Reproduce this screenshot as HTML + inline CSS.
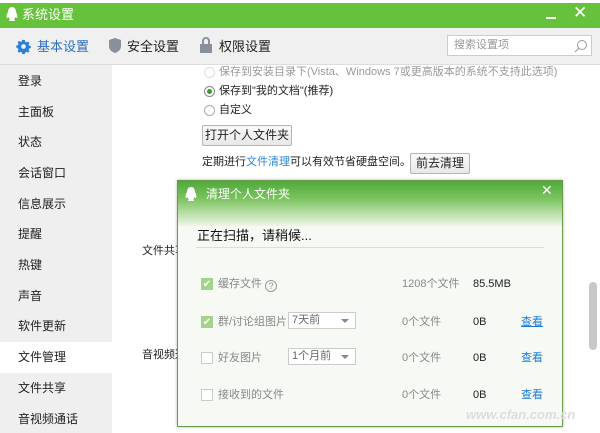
<!DOCTYPE html>
<html><head><meta charset="utf-8"><style>
*{margin:0;padding:0;box-sizing:border-box}
body{width:600px;height:433px;overflow:hidden;background:#fff;font-family:"Liberation Sans","Noto Sans CJK SC",sans-serif;font-size:12px;color:#222;position:relative}
.abs{position:absolute;line-height:15px}
.title{left:0;top:3px;width:600px;height:25px;background:#66c23b;color:#fff;font-size:13px}
.tabs{left:0;top:28px;width:600px;height:37px;background:#f0f0f0;border-bottom:1px solid #ddd}
.side{left:0;top:65px;width:112px;height:368px;background:#efefef}
.si{position:absolute;left:18px;font-size:12px;color:#222;line-height:15px}
.btn{position:absolute;border:1px solid #b5b5b5;background:linear-gradient(#fafafa,#e8e8e8);border-radius:2px;text-align:center;font-size:12px;line-height:19px}
.radio{position:absolute;width:11px;height:11px;border:1px solid #aaa;border-radius:50%;background:#fff}
.dlg{left:177px;top:180px;width:386px;height:247px;border:1px solid #6a9a4a;background:#f7faf4;box-shadow:0 0 3px rgba(0,0,0,.3)}
.chk{position:absolute;width:12px;height:12px;border:1px solid #ccc;background:#fff}
.chk.on{background:#a3d48a;border-color:#a3d48a;color:#fff;font-size:10px;line-height:11px;text-align:center}
.g{color:#888}
.sel{position:absolute;width:68px;height:17px;border:1px solid #ccc;background:#fff;color:#666;font-size:11px;line-height:15px;padding-left:3px}
.sel:after{content:"";position:absolute;right:6px;top:6px;border:4px solid transparent;border-top:4px solid #888}
.lk{color:#1a7ad8;text-decoration:underline;position:absolute;line-height:15px}
</style></head><body>
<div class="abs title">
 <svg class="abs" style="left:6px;top:4px" width="12" height="15" viewBox="0 0 12 15"><path d="M6 0C3 0 2 3 2 5 1 7 0 9 1 11c1 0 2-1 2-1 0 2 1 3 1 3-1 0-2 1 0 1h4c2 0 1-1 0-1 0 0 1-1 1-3 0 0 1 1 2 1 1-2 0-4-1-6 0-2-1-5-4-5z" fill="#fff"/></svg>
 <span class="abs" style="left:22px;top:4px">系统设置</span>
 <div class="abs" style="left:546px;top:14px;width:10px;height:2px;background:#fff"></div>
 <span class="abs" style="left:573px;top:2px;font-size:17px">✕</span>
</div>
<div class="abs tabs">
 <svg class="abs" style="left:16px;top:11px" width="15" height="15" viewBox="0 0 16 16"><path d="M8 1l1.5.2.4 1.8 1.3.6 1.6-1 1.6 1.6-1 1.6.6 1.3 1.8.4v2.2l-1.8.4-.6 1.3 1 1.6-1.6 1.6-1.6-1-1.3.6-.4 1.8H6.6l-.4-1.8-1.3-.6-1.6 1-1.6-1.6 1-1.6-.6-1.3L.3 9.1V6.9l1.8-.4.6-1.3-1-1.6 1.6-1.6 1.6 1 1.3-.6.4-1.8z" fill="#2d7fd6"/><circle cx="8" cy="8" r="2.5" fill="#f0f0f0"/></svg>
 <span class="abs" style="left:37px;top:11px;font-size:13px;color:#2d6fc0">基本设置</span>
 <svg class="abs" style="left:109px;top:10px" width="12" height="15" viewBox="0 0 12 15"><path d="M6 0L12 2v6c0 4-3 6-6 7-3-1-6-3-6-7V2z" fill="#8a9099"/></svg>
 <span class="abs" style="left:127px;top:11px;font-size:13px">安全设置</span>
 <svg class="abs" style="left:200px;top:9px" width="12" height="16" viewBox="0 0 12 16"><path d="M3 7V4a3 3 0 016 0v3" stroke="#8a9099" stroke-width="2" fill="none"/><rect x="0" y="7" width="12" height="9" fill="#8a9099"/></svg>
 <span class="abs" style="left:219px;top:11px;font-size:13px">权限设置</span>
 <div class="abs" style="left:447px;top:7px;width:145px;height:21px;border:1px solid #ccc;background:#fff;color:#999;font-size:11px;line-height:19px;padding-left:6px">搜索设置项</div>
 <svg class="abs" style="left:574px;top:11px" width="14" height="14" viewBox="0 0 14 14"><circle cx="8" cy="6" r="4.5" stroke="#999" fill="none"/><path d="M5 9l-4 4" stroke="#999"/></svg>
</div>
<div class="abs side">
 <div class="abs" style="left:0;top:277px;width:112px;height:31px;background:#fff"></div>
 <div class="si" style="top:9px">登录</div>
 <div class="si" style="top:40px">主面板</div>
 <div class="si" style="top:70px">状态</div>
 <div class="si" style="top:101px">会话窗口</div>
 <div class="si" style="top:132px">信息展示</div>
 <div class="si" style="top:162px">提醒</div>
 <div class="si" style="top:193px">热键</div>
 <div class="si" style="top:224px">声音</div>
 <div class="si" style="top:254px">软件更新</div>
 <div class="si" style="top:285px">文件管理</div>
 <div class="si" style="top:316px">文件共享</div>
 <div class="si" style="top:347px">音视频通话</div>
</div>
<div class="radio" style="left:204px;top:67px;border-color:#ddd"></div>
<span class="abs g" style="left:219px;top:65px;font-size:11px;color:#999">保存到安装目录下(Vista、Windows 7或更高版本的系统不支持此选项)</span>
<div class="radio" style="left:204px;top:86px;border-color:#888"><div style="width:5px;height:5px;border-radius:50%;background:#3a9a2a;margin:2px"></div></div>
<span class="abs" style="left:219px;top:84px;font-size:11px">保存到"我的文档"(推荐)</span>
<div class="radio" style="left:204px;top:105px"></div>
<span class="abs" style="left:219px;top:103px;font-size:11px">自定义</span>
<div class="btn" style="left:202px;top:125px;width:90px;height:21px">打开个人文件夹</div>
<span class="abs" style="left:202px;top:155px;font-size:11px">定期进行<span style="color:#2a86d6">文件清理</span>可以有效节省硬盘空间。</span>
<div class="btn" style="left:410px;top:153px;width:60px;height:21px">前去清理</div>
<span class="abs" style="left:142px;top:244px;font-size:11px">文件共享</span>
<span class="abs" style="left:142px;top:348px;font-size:11px">音视频通</span>
<div class="abs" style="left:589px;top:282px;width:8px;height:68px;background:#c8c8c8;border-radius:4px"></div>
<div class="abs dlg">
 <div class="abs" style="left:0;top:0;width:384px;height:45px;background:linear-gradient(#4fa93a,#7cc460 40%,#eef6e8)"></div>
 <svg class="abs" style="left:7px;top:6px" width="12" height="15" viewBox="0 0 12 15"><path d="M6 0C3 0 2 3 2 5 1 7 0 9 1 11c1 0 2-1 2-1 0 2 1 3 1 3-1 0-2 1 0 1h4c2 0 1-1 0-1 0 0 1-1 1-3 0 0 1 1 2 1 1-2 0-4-1-6 0-2-1-5-4-5z" fill="#fff"/></svg>
 <span class="abs" style="left:28px;top:6px;color:#fff;font-size:12px">清理个人文件夹</span>
 <span class="abs" style="left:363px;top:2px;color:#fff;font-size:14px">✕</span>
 <span class="abs" style="left:19px;top:47px;font-size:13px;color:#111">正在扫描，请稍候...</span>
 <div class="abs" style="left:18px;top:66px;width:348px;height:1px;background:#ddd"></div>
 <div class="chk on" style="left:23px;top:97px">✔</div>
 <span class="abs g" style="left:40px;top:96px;font-size:11px">缓存文件 <span style="display:inline-block;width:12px;height:12px;border:1px solid #999;border-radius:50%;font-size:9px;line-height:10px;text-align:center;vertical-align:-2px">?</span></span>
 <span class="abs g" style="left:224px;top:96px;font-size:11px">1208个文件</span>
 <span class="abs" style="left:295px;top:96px;font-size:11px">85.5MB</span>
 <div class="chk on" style="left:23px;top:135px">✔</div>
 <span class="abs g" style="left:40px;top:134px;font-size:11px">群/讨论组图片</span>
 <div class="sel" style="left:110px;top:131px">7天前</div>
 <span class="abs g" style="left:224px;top:134px;font-size:11px">0个文件</span>
 <span class="abs" style="left:295px;top:134px;font-size:11px">0B</span>
 <span class="lk" style="left:343px;top:134px;font-size:11px">查看</span>
 <div class="chk" style="left:23px;top:171px"></div>
 <span class="abs g" style="left:40px;top:170px;font-size:11px">好友图片</span>
 <div class="sel" style="left:110px;top:167px">1个月前</div>
 <span class="abs g" style="left:224px;top:170px;font-size:11px">0个文件</span>
 <span class="abs" style="left:295px;top:170px;font-size:11px">0B</span>
 <span class="abs" style="left:343px;top:170px;font-size:11px;color:#1a7ad8">查看</span>
 <div class="chk" style="left:23px;top:208px"></div>
 <span class="abs g" style="left:40px;top:207px;font-size:11px">接收到的文件</span>
 <span class="abs g" style="left:224px;top:207px;font-size:11px">0个文件</span>
 <span class="abs" style="left:295px;top:207px;font-size:11px">0B</span>
 <span class="abs" style="left:343px;top:207px;font-size:11px;color:#1a7ad8">查看</span>
 <span class="abs" style="left:288px;top:226px;font-size:13px;font-style:italic;font-weight:bold;color:#ddd">www.cfan.com.cn</span>
</div>
</body></html>
